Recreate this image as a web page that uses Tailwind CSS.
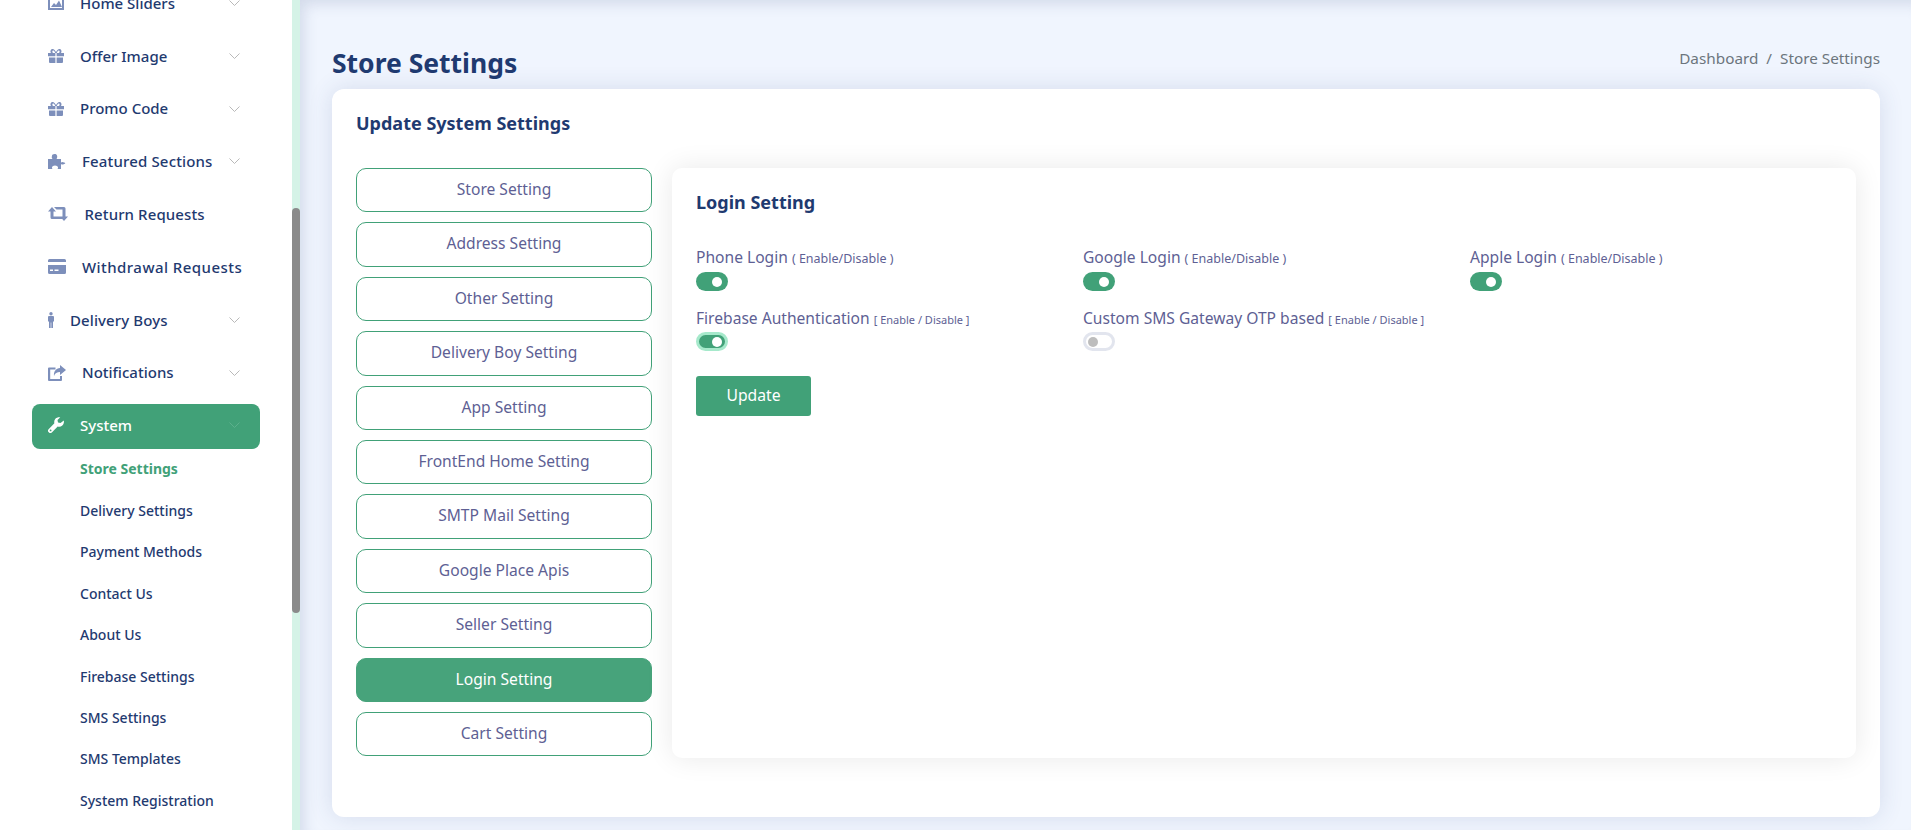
<!DOCTYPE html>
<html lang="en"><head><meta charset="utf-8"><title>Store Settings</title>
<script src="https://cdn.jsdelivr.net/npm/@tailwindcss/browser@4"></script></head>
<body class="m-0 h-[830px] w-[1911px] overflow-hidden bg-[#f0f5fe] font-['Noto_Sans','Lato',sans-serif]">
<div class="flex h-[830px] w-[1911px]">
  <aside class="relative h-[830px] w-[300px] shrink-0 overflow-hidden bg-white">
    <div class="absolute right-0 top-0 h-full w-2 bg-[#d5f3e7]"><div class="absolute left-0 top-[208px] h-[405px] w-2 rounded-full bg-[#8a8a8a]"></div></div>
    <nav class="-mt-[23.400px] w-[292px] whitespace-nowrap text-[15px] font-medium text-[#1f3a70]">
      <div class="flex h-[52.800px] items-center pl-12 pr-[52px]"><svg class="mr-[16px] h-4 w-[16px] shrink-0 text-[#7d8fbb]" viewBox="0 0 16 16" fill="currentColor"><path fill-rule="evenodd" d="M0 1h16v14H0zM2 3v10h12V3zM3 12l3-4 2 2 3-4.500 3 6.500z"/></svg><span class="flex-1">Home Sliders</span><svg class="h-2 w-[11px] text-[#b9b9b9]" viewBox="0 0 11 8" fill="none" stroke="currentColor"><path d="M.5 1.500l5 5 5-5"/></svg></div>
      <div class="flex h-[52.800px] items-center pl-12 pr-[52px]"><svg class="mr-[16px] h-4 w-[16px] shrink-0 text-[#7d8fbb]" viewBox="0 0 16 16" fill="currentColor"><path d="M1 9.500h6.400V15H2a1 1 0 0 1-1-1zM8.600 9.500H15V14a1 1 0 0 1-1 1H8.600zM0 5h7.400v3.300H0zM8.600 5H16v3.300H8.600zM3 5C1.500 2.500 3.500.5 5 1c1.300.4 2.500 2 3 3 .5-1 1.700-2.600 3-3 1.500-.5 3.500 1.500 2 4h-2c1-1 .8-2.700-.2-2.600C9.800 2.500 9 3.800 8.800 5H7.200C7 3.800 6.200 2.500 5.200 2.400 4.200 2.300 4 4 5 5z"/></svg><span class="flex-1">Offer Image</span><svg class="h-2 w-[11px] text-[#b9b9b9]" viewBox="0 0 11 8" fill="none" stroke="currentColor"><path d="M.5 1.500l5 5 5-5"/></svg></div>
      <div class="flex h-[52.800px] items-center pl-12 pr-[52px]"><svg class="mr-[16px] h-4 w-[16px] shrink-0 text-[#7d8fbb]" viewBox="0 0 16 16" fill="currentColor"><path d="M1 9.500h6.400V15H2a1 1 0 0 1-1-1zM8.600 9.500H15V14a1 1 0 0 1-1 1H8.600zM0 5h7.400v3.300H0zM8.600 5H16v3.300H8.600zM3 5C1.500 2.500 3.500.5 5 1c1.300.4 2.500 2 3 3 .5-1 1.700-2.600 3-3 1.500-.5 3.500 1.500 2 4h-2c1-1 .8-2.700-.2-2.600C9.800 2.500 9 3.800 8.800 5H7.200C7 3.800 6.200 2.500 5.200 2.400 4.200 2.300 4 4 5 5z"/></svg><span class="flex-1">Promo Code</span><svg class="h-2 w-[11px] text-[#b9b9b9]" viewBox="0 0 11 8" fill="none" stroke="currentColor"><path d="M.5 1.500l5 5 5-5"/></svg></div>
      <div class="flex h-[52.800px] items-center pl-12 pr-[52px]"><svg class="h-4 w-[18px] shrink-0 text-[#7d8fbb]" viewBox="0 0 18 16" fill="currentColor"><path d="M0 6h4.500c-.8-1-1-2-.5-3 -.5-1.800 4-3 5-.5.500 1.200.2 2.500-.5 3.500H13v3.500c1-.8 2-.8 3 0 1.700.2 1.700 1.300 0 1.500-1 .8-2 .8-3 0V16H9.500c.8-1 .8-2.200-.5-3-1-.7-3-.7-4 0-1.300.8-1.300 2-.5 3H0z"/></svg><span class="ml-4 flex-1 tracking-[.15px]">Featured Sections</span><svg class="h-2 w-[11px] text-[#b9b9b9]" viewBox="0 0 11 8" fill="none" stroke="currentColor"><path d="M.5 1.500l5 5 5-5"/></svg></div>
      <div class="flex h-[52.800px] items-center pl-12 pr-[52px]"><svg class="mr-[16.500px] h-[14px] w-[20px] shrink-0 text-[#7d8fbb]" viewBox="0 0 20 14" fill="currentColor"><path d="M4 0L8 4.500H5.500V9.500H12L14.500 12H4A1.500 1.500 0 0 1 2.500 10.500V4.500H0zM6 0H16A1.500 1.500 0 0 1 17.500 1.500V9.500H20L16 14 12 9.500H14.500V2.500H8.500z"/></svg><span class="flex-1 tracking-[.1px]">Return Requests</span></div>
      <div class="flex h-[52.800px] items-center pl-12 pr-[52px]"><svg class="mr-4 h-[15px] w-[18px] shrink-0 text-[#7d8fbb]" viewBox="0 0 18 15" fill="currentColor"><path d="M1.500 0h15A1.500 1.500 0 0 1 18 1.500V3H0V1.500A1.500 1.500 0 0 1 1.500 0zM0 6h18v7.500a1.500 1.500 0 0 1-1.500 1.500h-15A1.500 1.500 0 0 1 0 13.500zM2 10.500v1.500h3v-1.500zM6.500 10.500v1.500h4v-1.500z"/></svg><span class="flex-1 tracking-[.45px]">Withdrawal Requests</span></div>
      <div class="flex h-[52.800px] items-center pl-12 pr-[52px]"><svg class="mr-[16px] h-4 w-[6px] shrink-0 text-[#7d8fbb]" viewBox="0 0 6 16" fill="currentColor"><circle cx="3" cy="1.700" r="1.700"/><path d="M1 4h4a1 1 0 0 1 1 1v4.500H5V16H3.300v-5.500h-.6V16H1V9.500H0V5a1 1 0 0 1 1-1z"/></svg><span class="flex-1 tracking-[.1px]">Delivery Boys</span><svg class="h-2 w-[11px] text-[#b9b9b9]" viewBox="0 0 11 8" fill="none" stroke="currentColor"><path d="M.5 1.500l5 5 5-5"/></svg></div>
      <div class="flex h-[52.800px] items-center pl-12 pr-[52px]"><svg class="mr-4 h-4 w-[18px] shrink-0 text-[#7d8fbb]" viewBox="0 0 18 16" fill="currentColor"><path d="M1 2.500h6.500v2H2.200v9.500H12V11h2v4a1 1 0 0 1-1 1H1a1 1 0 0 1-1-1V3.500a1 1 0 0 1 1-1zM12 0l6 5-6 5V7C9 7 7 8 6 11 5.500 6.500 8 3.500 12 3z"/></svg><span class="flex-1">Notifications</span><svg class="h-2 w-[11px] text-[#b9b9b9]" viewBox="0 0 11 8" fill="none" stroke="currentColor"><path d="M.5 1.500l5 5 5-5"/></svg></div>
      <div class="ml-8 mt-[5px] flex h-[45px] w-[228px] items-center rounded-lg bg-[#41a178] pb-[2px] pl-4 pr-5 text-white"><svg class="mr-4 h-4 w-4 shrink-0" viewBox="0 0 16 16" fill="currentColor"><path d="M15.800 3.600c.4 1.900-.1 3.800-1.500 5-1.300 1.200-3 1.500-4.600 1L3.800 15.400a2 2 0 0 1-2.900 0l-.3-.3a2 2 0 0 1 0-2.900l5.800-5.900c-.5-1.600-.1-3.300 1-4.600C8.700.4 10.500-.1 12.300.3L9.500 3.100l.5 2.500 2.500.5zM2.600 12.500a.9.900 0 1 0 0 1.800.9.900 0 0 0 0-1.800z"/></svg><span class="flex-1">System</span><svg class="h-2 w-[11px] text-[#5cb08c]" viewBox="0 0 11 8" fill="none" stroke="currentColor"><path d="M.5 1.500l5 5 5-5"/></svg></div>
      <ul class="pl-20 text-[14px] leading-[41.400px] text-[#1f3a70]">
        <li class="-mt-[.5px] font-bold text-[#41a178]">Store Settings</li><li>Delivery Settings</li><li>Payment Methods</li><li>Contact Us</li><li>About Us</li><li>Firebase Settings</li><li>SMS Settings</li><li>SMS Templates</li><li>System Registration</li>
      </ul>
    </nav>
  </aside>
  <main class="h-[830px] flex-1 pl-8 pr-[31px] shadow-[inset_8px_8px_14px_-4px_rgba(60,80,130,.16)]">
    <div class="flex h-[89px] items-end justify-between pb-[7px]">
      <h1 class="text-[26.500px] font-bold leading-[38px] text-[#1f3a70]">Store Settings</h1>
      <div class="pb-[12px] text-[15.300px] text-[#6c757d]">Dashboard&nbsp;&nbsp;/&nbsp;&nbsp;Store Settings</div>
    </div>
    <section class="h-[728px] rounded-xl bg-white px-6 pt-6 shadow-[0_0_24px_rgba(50,70,130,.14)]">
      <h2 class="text-[18px] font-bold leading-[20px] text-[#1f3a70]">Update System Settings</h2>
      <div class="mt-[35px] flex gap-5">
        <div class="flex w-[296px] flex-col gap-[10px] text-[15.600px] text-[#5e5f94]">
          <button class="h-[44.400px] rounded-[10px] border border-[#41a178] pb-[1px]">Store Setting</button>
          <button class="h-[44.400px] rounded-[10px] border border-[#41a178] pb-[1px]">Address Setting</button>
          <button class="h-[44.400px] rounded-[10px] border border-[#41a178] pb-[1px]">Other Setting</button>
          <button class="h-[44.400px] rounded-[10px] border border-[#41a178] pb-[1px]">Delivery Boy Setting</button>
          <button class="h-[44.400px] rounded-[10px] border border-[#41a178] pb-[1px]">App Setting</button>
          <button class="h-[44.400px] rounded-[10px] border border-[#41a178] pb-[1px]">FrontEnd Home Setting</button>
          <button class="h-[44.400px] rounded-[10px] border border-[#41a178] pb-[1px]">SMTP Mail Setting</button>
          <button class="h-[44.400px] rounded-[10px] border border-[#41a178] pb-[1px]">Google Place Apis</button>
          <button class="h-[44.400px] rounded-[10px] border border-[#41a178] pb-[1px]">Seller Setting</button>
          <button class="h-[44.400px] rounded-[10px] border border-[#47a37b] bg-[#47a37b] pb-[1px] text-white">Login Setting</button>
          <button class="h-[44.400px] rounded-[10px] border border-[#41a178] pb-[1px]">Cart Setting</button>
        </div>
        <div class="h-[590px] w-[1184px] rounded-[10px] bg-white px-6 pt-6 shadow-[0_0_28px_rgba(0,0,0,.09)]">
          <h3 class="text-[18px] font-bold leading-[20px] text-[#1f3a70]">Login Setting</h3>
          <div class="mt-[35px] grid w-[1161px] grid-cols-3 gap-y-[17px] text-[15.600px] leading-[20px] text-[#5e5f94]">
            <div><p class="h-5">Phone Login <span class="text-[12.500px] leading-none">( Enable/Disable )</span></p><div class="mt-[5px] flex h-[19px] w-8 items-center justify-end rounded-full bg-[#41a178] pr-[6px]"><i class="block h-[10px] w-[10px] rounded-full bg-white"></i></div></div>
            <div><p class="h-5">Google Login <span class="text-[12.500px] leading-none">( Enable/Disable )</span></p><div class="mt-[5px] flex h-[19px] w-8 items-center justify-end rounded-full bg-[#41a178] pr-[6px]"><i class="block h-[10px] w-[10px] rounded-full bg-white"></i></div></div>
            <div><p class="h-5">Apple Login <span class="text-[12.500px] leading-none">( Enable/Disable )</span></p><div class="mt-[5px] flex h-[19px] w-8 items-center justify-end rounded-full bg-[#41a178] pr-[6px]"><i class="block h-[10px] w-[10px] rounded-full bg-white"></i></div></div>
            <div><p class="h-5">Firebase Authentication <span class="text-[11px] leading-none">[ Enable / Disable ]</span></p><div class="mt-[4px] flex h-[19px] w-8 items-center justify-end rounded-full border-[3px] border-[#a6e9cb] bg-[#41a178] pr-[3px]"><i class="block h-[10px] w-[10px] rounded-full bg-white"></i></div></div>
            <div><p class="h-5">Custom SMS Gateway OTP based <span class="text-[11px] leading-none">[ Enable / Disable ]</span></p><div class="mt-[4px] flex h-[19px] w-8 items-center rounded-full border-[3px] border-[#e2e5ee] bg-white pl-[2px]"><i class="block h-[10px] w-[10px] rounded-full bg-[#bdbdbd]"></i></div></div>
          </div>
          <button class="mt-[25px] h-10 w-[115px] rounded-[3px] bg-[#41a178] text-[15.700px] text-white">Update</button>
        </div>
      </div>
    </section>
  </main>
</div>
</body></html>
